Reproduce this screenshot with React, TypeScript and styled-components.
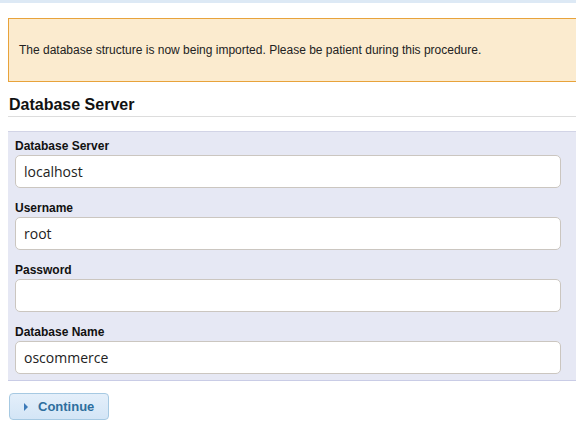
import React from "react";
import styled, { createGlobalStyle } from "styled-components";

const Global = createGlobalStyle`
  html, body { margin: 0; padding: 0; background: #fff; overflow: hidden; }
  body { font-family: "Liberation Sans", Arial, sans-serif; color: #222; }
`;

const TopBar = styled.div`
  height: 3px;
  background: #dde9f5;
`;

const Page = styled.div`
  width: 600px;
  padding: 15px 0 0 8px;
`;

const Notice = styled.div`
  background: #fbebcf;
  border: 1px solid #e8a33b;
  height: 62px;
  display: flex;
  align-items: center;
  padding-left: 10px;
  font-size: 12px;
  color: #222;
`;

const Heading = styled.h2`
  margin: 14px 0 0;
  padding: 0 0 2px 1px;
  font-size: 16px;
  font-weight: bold;
  color: #111;
  border-bottom: 1px solid #ddd;
`;

const Panel = styled.div`
  margin-top: 14px;
  background: #e6e8f4;
  border-top: 1px solid #d2d4e6;
  border-bottom: 1px solid #c9cce6;
  padding: 6px 0 6px 7px;
  display: flex;
  flex-direction: column;
`;

const Field = styled.div`
  display: flex;
  flex-direction: column;
  & + & { margin-top: 12px; }
`;

const Label = styled.label`
  font-size: 12px;
  font-weight: bold;
  color: #111;
  height: 16px;
  line-height: 16px;
  margin-bottom: 1px;
`;

const Input = styled.input`
  box-sizing: border-box;
  width: 546px;
  height: 33px;
  border: 1px solid #cbc6c0;
  border-radius: 5px;
  background: #fff;
  padding: 0 8px;
  font-family: "Open Sans", "Noto Sans", sans-serif;
  font-size: 14px;
  color: #222;
  outline: none;
`;

const Button = styled.button`
  margin-top: 12px;
  margin-left: 1px;
  width: 100px;
  height: 27px;
  box-sizing: border-box;
  border: 1px solid #a6c9e2;
  border-radius: 4px;
  background: linear-gradient(#e4effa, #d3e5f6);
  color: #2e6e9e;
  font-family: "Liberation Sans", Arial, sans-serif;
  font-weight: bold;
  font-size: 13px;
  display: flex;
  align-items: center;
  padding: 0 0 0 14px;
  gap: 10px;
  cursor: pointer;
`;

const Caret = styled.span`
  width: 0;
  height: 0;
  border-top: 4px solid transparent;
  border-bottom: 4px solid transparent;
  border-left: 4px solid #3d7ab8;
`;

const fields = [
  { label: "Database Server", value: "localhost" },
  { label: "Username", value: "root" },
  { label: "Password", value: "" },
  { label: "Database Name", value: "oscommerce" },
];

export default function App() {
  return (
    <>
      <Global />
      <TopBar />
      <Page>
        <Notice>The database structure is now being imported. Please be patient during this procedure.</Notice>
        <Heading>Database Server</Heading>
        <Panel>
          {fields.map((f) => (
            <Field key={f.label}>
              <Label>{f.label}</Label>
              <Input type={f.label === "Password" ? "password" : "text"} defaultValue={f.value} />
            </Field>
          ))}
        </Panel>
        <Button>
          <Caret />
          Continue
        </Button>
      </Page>
    </>
  );
}
